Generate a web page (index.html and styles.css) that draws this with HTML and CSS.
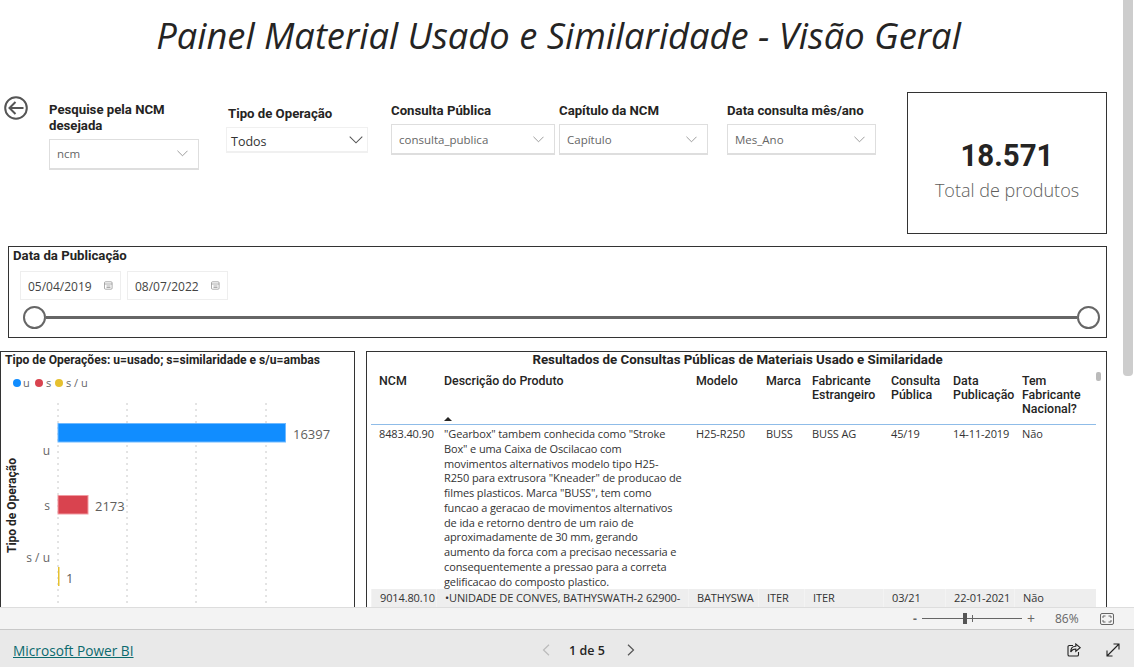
FILE: index.html
```html
<!DOCTYPE html>
<html lang="pt-BR">
<head>
<meta charset="utf-8">
<title>Painel Material Usado e Similaridade</title>
<link rel="stylesheet" href="styles.css">
</head>
<body>
<div class="app">
  <main class="canvas">
    <h1 class="title">Painel Material Usado e Similaridade - Visão Geral</h1>
    <section class="filters">
      <svg class="back" viewBox="0 0 24 24" width="24" height="24"><circle cx="12" cy="12" r="10.800" fill="none" stroke="#555" stroke-width="2"/><path d="M19.500 12H6M11.500 6L5.500 12l6 6" fill="none" stroke="#555" stroke-width="2"/></svg>
      <div class="filter f1">
        <div class="flabel">Pesquise pela NCM<br>desejada</div>
        <div class="select"><span>ncm</span><svg class="chev" viewBox="0 0 12 7"><path d="M.5.5L6 6 11.5.5"/></svg></div>
      </div>
      <div class="filter f2">
        <div class="flabel">Tipo de Operação</div>
        <div class="select light"><span>Todos</span><svg class="chev" viewBox="0 0 12 7"><path d="M.5.5L6 6 11.5.5"/></svg></div>
      </div>
      <div class="filter f3">
        <div class="flabel">Consulta Pública</div>
        <div class="select"><span>consulta_publica</span><svg class="chev" viewBox="0 0 12 7"><path d="M.5.5L6 6 11.5.5"/></svg></div>
      </div>
      <div class="filter f4">
        <div class="flabel">Capítulo da NCM</div>
        <div class="select"><span>Capítulo</span><svg class="chev" viewBox="0 0 12 7"><path d="M.5.5L6 6 11.5.5"/></svg></div>
      </div>
      <div class="filter f5">
        <div class="flabel">Data consulta mês/ano</div>
        <div class="select"><span>Mes_Ano</span><svg class="chev" viewBox="0 0 12 7"><path d="M.5.5L6 6 11.5.5"/></svg></div>
      </div>
      <div class="kpi">
        <div class="kpi-value">18.571</div>
        <div class="kpi-label">Total de produtos</div>
      </div>
    </section>

    <section class="dates">
      <div class="flabel">Data da Publicação</div>
      <div class="date-row">
        <div class="date"><span>05/04/2019</span><svg class="cal" viewBox="0 0 9 9"><rect x=".5" y=".8" width="7.6" height="7.4" rx="1"/><path d="M.5 3h7.6M2.5 5h4M2.5 6.5h4"/></svg></div>
        <div class="date"><span>08/07/2022</span><svg class="cal" viewBox="0 0 9 9"><rect x=".5" y=".8" width="7.6" height="7.4" rx="1"/><path d="M.5 3h7.6M2.5 5h4M2.5 6.5h4"/></svg></div>
      </div>
      <div class="slider"><span class="knob"></span><span class="track"></span><span class="knob"></span></div>
    </section>

    <section class="bottom">
      <div class="chart">
        <div class="chart-title">Tipo de Operações: u=usado; s=similaridade e s/u=ambas</div>
        <svg class="plot" viewBox="0 0 352 256" width="352" height="256">
          <g class="grid">
            <path d="M58 51V256M127 51V256M196 51V256M266 51V256"/>
          </g>
          <circle cx="17" cy="31" r="4" fill="#118dff"/><text class="lg" x="23" y="35">u</text>
          <circle cx="39" cy="31" r="4" fill="#d9434f"/><text class="lg" x="46" y="35">s</text>
          <circle cx="59" cy="31" r="4" fill="#e6c12f"/><text class="lg" x="66" y="35">s / u</text>
          <rect x="58" y="71.500" width="227.500" height="18.500" fill="#118dff" stroke="#6fb9ff"/>
          <rect x="58" y="143.500" width="30" height="18.500" fill="#d9434f" stroke="#f19aa1"/>
          <rect x="58" y="215" width="1.500" height="19" fill="#e6c12f"/>
          <text class="val" x="293" y="87">16397</text>
          <text class="val" x="95" y="159">2173</text>
          <text class="val" x="66" y="231">1</text>
          <text class="cat" x="50" y="103" text-anchor="end">u</text>
          <text class="cat" x="50" y="158" text-anchor="end">s</text>
          <text class="cat" x="50" y="210" text-anchor="end">s / u</text>
          <text class="axis" transform="translate(16 201) rotate(-90)">Tipo de Operação</text>
        </svg>
      </div>
      <div class="results">
        <div class="results-title">Resultados de Consultas Públicas de Materiais Usado e Similaridade</div>
        <span class="tscroll"></span>
        <table class="table">
          <colgroup>
            <col class="c1"><col class="c2"><col class="c3"><col class="c4"><col class="c5"><col class="c6"><col class="c7"><col class="c8">
          </colgroup>
          <thead>
            <tr>
              <th>NCM</th>
              <th class="sorted">Descrição do Produto<svg class="sort" viewBox="0 0 8 4"><path d="M4 0l4 4H0z"/></svg></th>
              <th>Modelo</th>
              <th>Marca</th>
              <th>Fabricante Estrangeiro</th>
              <th>Consulta Pública</th>
              <th>Data Publicação</th>
              <th>Tem Fabricante Nacional?</th>
            </tr>
          </thead>
          <tbody>
            <tr>
              <td>8483.40.90</td>
              <td>"Gearbox" tambem conhecida como "Stroke<br>Box" e uma Caixa de Oscilacao com<br>movimentos alternativos modelo tipo H25-<br>R250 para extrusora "Kneader" de producao de<br>filmes plasticos. Marca "BUSS", tem como<br>funcao a geracao de movimentos alternativos<br>de ida e retorno dentro de um raio de<br>aproximadamente de 30 mm, gerando<br>aumento da forca com a precisao necessaria e<br>consequentemente a pressao para a correta<br>gelificacao do composto plastico.</td>
              <td>H25-R250</td>
              <td>BUSS</td>
              <td>BUSS AG</td>
              <td>45/19</td>
              <td>14-11-2019</td>
              <td>Não</td>
            </tr>
            <tr class="alt">
              <td>9014.80.10</td>
              <td>•UNIDADE DE CONVES, BATHYSWATH-2 62900-</td>
              <td>BATHYSWA</td>
              <td>ITER</td>
              <td>ITER</td>
              <td>03/21</td>
              <td>22-01-2021</td>
              <td>Não</td>
            </tr>
          </tbody>
        </table>
      </div>
    </section>
    <div class="scrollbar"><span class="thumb"></span></div>
  </main>

  <div class="zoombar">
    <span class="zm">-</span>
    <div class="zslider"><span class="ztick"></span><span class="zthumb"></span></div>
    <span class="zm plus">+</span>
    <span class="zpct">86%</span>
    <svg class="fit" viewBox="0 0 14 12" width="14" height="12"><rect x=".5" y=".5" width="13" height="11" rx="1.500" fill="none" stroke="#666"/><path d="M3 5V3h2.500M11 5V3H8.500M3 7v2h2.500M11 7v2H8.500" fill="none" stroke="#666"/></svg>
  </div>

  <footer class="footer">
    <a class="brand" href="#">Microsoft Power BI</a>
    <nav class="pager">
      <svg viewBox="0 0 8 12" width="8" height="12"><path d="M7 .7L1.500 6 7 11.300" fill="none" stroke="#bbb" stroke-width="1.200"/></svg>
      <span class="page">1 de 5</span>
      <svg viewBox="0 0 8 12" width="8" height="12"><path d="M1 .7L6.500 6 1 11.300" fill="none" stroke="#555" stroke-width="1.200"/></svg>
    </nav>
    <div class="actions">
      <svg viewBox="0 0 14 14" width="14" height="14"><path d="M6 2.500H2.300A1.300 1.300 0 0 0 1 3.800v7.900A1.300 1.300 0 0 0 2.300 13h7.900a1.300 1.300 0 0 0 1.300-1.300V9M13.200 4.700L8.800 1v2.300C6 3.300 3.700 5.300 3.700 9c1-2 2.700-3 5.100-3v2.300z" fill="none" stroke="#222" stroke-width="1.100"/></svg>
      <svg viewBox="0 0 14 14" width="14" height="14"><path d="M1 13L13 1M7.500 1H13v5.500M1 7.500V13h5.500" fill="none" stroke="#222" stroke-width="1.100"/></svg>
    </div>
  </footer>
</div>
</body>
</html>
```
FILE: styles.css
```css
* { box-sizing: border-box; }
html, body { margin: 0; height: 100%; overflow: hidden; background: #fff; }
body { font-family: "Open Sans", "Noto Sans", sans-serif; color: #252423; }
.app { width: 1134px; height: 667px; display: flex; flex-direction: column; }

.canvas { position: relative; height: 607px; flex: none; overflow: hidden; }
.title { margin: 0; height: 72px; padding: 12px 17px 0 0; text-align: center; font-size: 36.300px; line-height: 46px; font-weight: 400; font-style: italic; color: #252423; white-space: nowrap; }

.filters { height: 162px; padding: 20px 27px 0 5px; display: flex; align-items: flex-start; position: relative; }
.back { margin-top: 4px; flex: none; margin-left: -1px; }
.filter { flex: none; }
.flabel { font-family: Roboto, "Noto Sans", sans-serif; font-weight: 700; font-size: 13.200px; line-height: 16px; color: #252423; white-space: nowrap; }
.select { height: 31px; border: 1px solid #dedede; border-bottom-width: 2px; display: flex; align-items: center; justify-content: space-between; padding: 0 10px 0 7px; font-size: 11.500px; color: #666; }
.select.light { height: 26px; border-color: #f0f0f0; color: #333; font-size: 12.500px; padding: 3px 4px 0 4px; }
.chev { width: 11px; height: 7px; }
.chev path { fill: none; stroke: #888; stroke-width: .9; }
.select.light .chev { width: 14px; height: 8px; margin-top: -3px; }
.select.light .chev path { stroke: #555; }

.f1 { width: 150px; margin: 10px 0 0 21px; }
.f1 .select { margin-top: 5px; padding-bottom: 2px; }
.f2 { width: 142px; margin: 14px 0 0 27px; }
.f2 .flabel { margin-bottom: 5px; padding-left: 2px; }
.f3 { width: 164px; margin: 10px 0 0 23px; }
.f4 { width: 149px; margin: 10px 0 0 4px; }
.f5 { width: 149px; margin: 10px 0 0 19px; }
.f3 .flabel, .f4 .flabel, .f5 .flabel { margin-bottom: 5px; margin-top: 1px; }
.kpi { margin-left: 31px; width: 200px; height: 142px; border: 1px solid #333; display: flex; flex-direction: column; align-items: center; padding-top: 43px; }
.kpi-value { font-family: Roboto, sans-serif; font-weight: 700; font-size: 31px; line-height: 40px; color: #252423; transform: scaleX(.95); }
.kpi-label { font-size: 18px; line-height: 24px; color: #605e5c; margin-top: 2px; font-weight: 300; white-space: nowrap; }

.dates { margin: 12px 0 0 8px; width: 1099px; height: 92px; border: 1px solid #333; padding: 1px 3px 0 3px; }
.dates .flabel { margin-left: 1px; }
.date-row { display: flex; gap: 6px; margin: 7px 0 0 8px; }
.date { width: 101px; height: 29px; border: 1px solid #eee; display: flex; align-items: center; justify-content: space-between; padding: 2px 7px 0; font-size: 12px; color: #444; }
.cal { width: 9px; height: 9px; margin-top: -2px; }
.cal rect, .cal path { fill: none; stroke: #888; stroke-width: .7; }
.slider { display: flex; align-items: center; margin: 6px 3px 0 11px; }
.knob { width: 23px; height: 23px; border-radius: 50%; border: 2px solid #666; background: #fff; flex: none; }
.track { flex: 1; height: 3px; background: #666; }

.bottom { margin-top: 13px; display: flex; gap: 11px; align-items: flex-start; }
.chart { width: 355px; height: 260px; border: 1px solid #333; position: relative; flex: none; }
.chart-title { font-family: Roboto, sans-serif; font-weight: 700; font-size: 12.100px; line-height: 16px; padding-left: 4px; white-space: nowrap; position: absolute; top: 0; left: 0; }
.plot { display: block; margin-left: -1px; }
.grid path { stroke: #c8c8c8; stroke-width: 1; stroke-dasharray: 2 4; fill: none; }
.plot text { font-family: "Open Sans", sans-serif; }
.plot .lg { font-size: 11px; fill: #666; }
.plot .val { font-size: 13px; fill: #605e5c; }
.plot .cat { font-size: 12px; fill: #666; }
.plot .axis { font-family: Roboto, sans-serif; font-weight: 700; font-size: 12px; fill: #252423; }

.results { width: 741px; height: 300px; border: 1px solid #333; position: relative; flex: none; padding: 0 4px; }
.results-title { font-family: Roboto, sans-serif; font-weight: 700; font-size: 13.300px; line-height: 16px; text-align: center; white-space: nowrap; padding-left: 2px; }
.tscroll { position: absolute; top: 20px; right: 5px; width: 5px; height: 9px; background: #bbb; border-radius: 2px; }
.table { border-collapse: separate; border-spacing: 0; table-layout: fixed; width: 725px; }
.c1 { width: 65px; } .c2 { width: 252px; } .c3 { width: 70px; } .c4 { width: 46px; }
.c5 { width: 79px; } .c6 { width: 62px; } .c7 { width: 69px; } .c8 { width: 82px; }
.table th { font-family: Roboto, sans-serif; font-weight: 500; font-size: 12.400px; line-height: 14px; color: #252423; text-align: left; vertical-align: top; height: 57px; padding: 6px 4px 0 8px; border-bottom: 1px solid #8fbce8; position: relative; }
.table td { font-size: 11px; line-height: 14.750px; color: #333; vertical-align: top; padding: 2px 0 0 8px; white-space: nowrap; overflow: hidden; letter-spacing: -.12px; }
.alt td { background: #eee; border-left: 1px solid #f3f3f3; height: 19px; }
.sort { position: absolute; left: 8px; bottom: 3px; width: 8px; height: 4px; }
.sort path { fill: #252423; }

.scrollbar { position: absolute; top: 0; right: 0; width: 11px; height: 100%; background: #fff; }
.thumb { display: block; width: 10px; height: 376px; background: #cdcdcd; border-radius: 0 0 4px 4px; }

.zoombar { height: 23px; flex: none; background: #f3f3f3; border-top: 1px solid #ddd; border-bottom: 1px solid #c8c8c8; display: flex; align-items: center; padding-left: 913px; font-size: 12px; color: #666; }
.zm { width: 9px; font-weight: 700; }
.zm.plus { margin-left: 5px; font-weight: 400; font-size: 14px; width: 12px; }
.zslider { width: 100px; height: 1px; background: #666; position: relative; }
.ztick { position: absolute; left: 50px; top: -3px; width: 1px; height: 7px; background: #666; }
.zthumb { position: absolute; left: 41px; top: -5px; width: 4px; height: 11px; background: #555; }
.zpct { margin-left: 16px; width: 45px; }
.footer { height: 37px; flex: none; background: #e9e9e9; display: flex; align-items: center; position: relative; padding: 3px 13px 0; }
.brand { font-size: 13.700px; color: #0b6a6e; text-decoration: underline; }
.pager { position: absolute; left: 542px; top: 3px; height: 34px; display: flex; align-items: center; }
.page { font-size: 12.500px; font-weight: 600; color: #252423; width: 77px; padding-left: 19px; }
.actions { margin-left: auto; display: flex; gap: 25px; padding-right: 1px; }
```
